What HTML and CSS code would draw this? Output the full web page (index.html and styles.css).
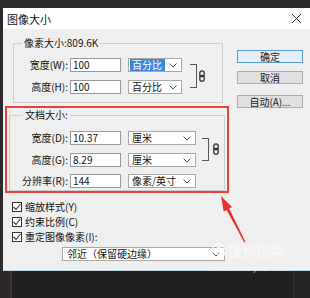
FILE: index.html
```html
<!DOCTYPE html>
<html>
<head>
    <meta charset="UTF-8">
    <title>图像大小</title>
    <link rel="stylesheet" href="styles.css">
</head>
<body>
    <div class="screen">
        <div class="dialog">
            <div class="titlebar">
                <span class="title">图像大小</span>
                <svg class="close" width="11" height="11" viewBox="0 0 11 11"><path d="M1 1L10 10M10 1L1 10" stroke="#333" stroke-width="1"/></svg>
            </div>
            <div class="content">
                <div class="left">
                    <!-- pixel size -->
                    <fieldset class="group group-pixel">
                        <legend>像素大小:809.6K</legend>
                        <div class="linked">
                            <div class="rows">
                                <div class="row">
                                    <label>宽度(W):</label>
                                    <div class="input">100</div>
                                    <div class="select selected"><span class="value">百分比</span><svg class="chev" width="8" height="5" viewBox="0 0 8 5"><polyline points="0.5,0.5 4,4 7.5,0.5" fill="none" stroke="#555"/></svg></div>
                                </div>
                                <div class="row">
                                    <label>高度(H):</label>
                                    <div class="input">100</div>
                                    <div class="select"><span class="value">百分比</span><svg class="chev" width="8" height="5" viewBox="0 0 8 5"><polyline points="0.5,0.5 4,4 7.5,0.5" fill="none" stroke="#555"/></svg></div>
                                </div>
                            </div>
                            <div class="bracket"></div>
                            <svg class="chain" width="6" height="12" viewBox="0 0 6 12"><rect x="0.8" y="0.8" width="4.4" height="5.8" rx="2.2" fill="none" stroke="#333" stroke-width="1.3"/><rect x="0.8" y="5.4" width="4.4" height="5.8" rx="2.2" fill="none" stroke="#333" stroke-width="1.3"/></svg>
                        </div>
                    </fieldset>

                    <!-- document size, marked in red -->
                    <div class="highlight">
                        <fieldset class="group group-doc">
                            <legend>文档大小:</legend>
                            <div class="linked">
                                <div class="rows">
                                    <div class="row">
                                        <label>宽度(D):</label>
                                        <div class="input">10.37</div>
                                        <div class="select"><span class="value">厘米</span><svg class="chev" width="8" height="5" viewBox="0 0 8 5"><polyline points="0.5,0.5 4,4 7.5,0.5" fill="none" stroke="#555"/></svg></div>
                                    </div>
                                    <div class="row">
                                        <label>高度(G):</label>
                                        <div class="input">8.29</div>
                                        <div class="select"><span class="value">厘米</span><svg class="chev" width="8" height="5" viewBox="0 0 8 5"><polyline points="0.5,0.5 4,4 7.5,0.5" fill="none" stroke="#555"/></svg></div>
                                    </div>
                                </div>
                                <div class="bracket"></div>
                                <svg class="chain" width="6" height="12" viewBox="0 0 6 12"><rect x="0.8" y="0.8" width="4.4" height="5.8" rx="2.2" fill="none" stroke="#333" stroke-width="1.3"/><rect x="0.8" y="5.4" width="4.4" height="5.8" rx="2.2" fill="none" stroke="#333" stroke-width="1.3"/></svg>
                            </div>
                            <div class="row row-res">
                                <label>分辨率(R):</label>
                                <div class="input">144</div>
                                <div class="select"><span class="value">像素/英寸</span><svg class="chev" width="8" height="5" viewBox="0 0 8 5"><polyline points="0.5,0.5 4,4 7.5,0.5" fill="none" stroke="#555"/></svg></div>
                            </div>
                        </fieldset>
                    </div>

                    <div class="options">
                        <div class="option"><span class="check"><svg width="8" height="8" viewBox="0 0 8 8"><polyline points="0.5,4 3,6.5 7.5,1" fill="none" stroke="#333" stroke-width="1.1"/></svg></span>缩放样式(Y)</div>
                        <div class="option"><span class="check"><svg width="8" height="8" viewBox="0 0 8 8"><polyline points="0.5,4 3,6.5 7.5,1" fill="none" stroke="#333" stroke-width="1.1"/></svg></span>约束比例(C)</div>
                        <div class="option"><span class="check"><svg width="8" height="8" viewBox="0 0 8 8"><polyline points="0.5,4 3,6.5 7.5,1" fill="none" stroke="#333" stroke-width="1.1"/></svg></span>重定图像像素(I):</div>
                    </div>
                    <div class="select select-method"><span class="value">邻近（保留硬边缘）</span><svg class="chev" width="8" height="5" viewBox="0 0 8 5"><polyline points="0.5,0.5 4,4 7.5,0.5" fill="none" stroke="#555"/></svg></div>
                </div>

                <div class="buttons">
                    <div class="btn btn-default">确定</div>
                    <div class="btn">取消</div>
                    <div class="btn btn-auto">自动(A)...</div>
                </div>
            </div>
        </div>
        <div class="below">
            <div class="below-left"></div>
            <div class="below-mid"></div>
            <div class="below-right"></div>
        </div>
    </div>

    <!-- annotation arrow -->
    <svg class="arrow" width="310" height="298" viewBox="0 0 310 298">
        <polygon points="221,196 232,207 229.2,208.6 245.5,242 244.3,242.4 226.6,210 223.6,211.6" fill="#e8322f"/>
    </svg>

    <!-- watermark -->
    <div class="watermark">
        <div class="wm-top">
            <svg width="17" height="16" viewBox="0 0 17 16"><circle cx="8.5" cy="8" r="6.8" fill="none" stroke="#fff" stroke-width="1.6"/><path d="M11 5.2C9.5 4 6 4.5 6.4 6.8C6.8 8.6 10.8 7.8 10.6 10C10.4 12 7 11.8 5.6 10.6" fill="none" stroke="#fff" stroke-width="1.4"/></svg>
            <span>搜狗指南</span>
        </div>
        <div class="wm-url">zhinan.sogou.com</div>
    </div>
</body>
</html>
```

FILE: styles.css
```css
body {
    margin: 0;
    width: 310px;
    height: 298px;
    overflow: hidden;
    background-color: #1e1e1e;
    font-family: "Noto Sans CJK SC", "Noto Sans", sans-serif;
    font-size: 10px;
    color: #111;
    position: relative;
}
.screen {
    padding-top: 8px;
    background-color: #2a2a2a;
}
.dialog {
    margin-left: 3px;
    height: 263px;
    box-sizing: border-box;
    background-color: #f0efef;
    border-bottom: 1px solid #c3d7e6;
}
.titlebar {
    height: 21px;
    background-color: #fff;
    display: flex;
    align-items: center;
    justify-content: space-between;
    padding: 0 8px 0 4px;
}
.title {
    font-size: 11px;
    line-height: 14px;
}
.content {
    display: flex;
    padding-top: 8px;
}
.left {
    width: 226px;
}
.group {
    margin: 0;
    padding: 0;
    border: 1px solid #cdcdcd;
    min-width: 0;
}
.group legend {
    padding: 0 2px;
    line-height: 12px;
}
.group-pixel {
    margin-left: 10px;
    width: 210px;
    box-sizing: border-box;
    padding-bottom: 8px;
}
.group-pixel legend {
    margin-left: 8px;
}
.linked {
    display: flex;
    align-items: center;
}
.group-pixel .linked {
    margin-top: 9px;
}
.rows {
    display: flex;
    flex-direction: column;
    gap: 8px;
}
.row {
    display: flex;
    align-items: center;
    height: 14px;
}
.row label {
    width: 54px;
    margin-right: 2px;
    text-align: right;
    line-height: 12px;
}
.input {
    width: 51px;
    height: 14px;
    box-sizing: border-box;
    border: 1px solid #9a9a9a;
    background-color: #fff;
    padding-left: 2px;
    line-height: 12px;
}
.select {
    display: flex;
    align-items: center;
    height: 14px;
    box-sizing: border-box;
    border: 1px solid #a8a8a8;
    background-color: #fff;
    padding: 0 1px;
    margin-left: 7px;
    width: 54px;
}
.select .value {
    flex: 1;
    padding-left: 2px;
    line-height: 12px;
    white-space: nowrap;
}
.select.selected .value {
    background-color: #3b88d9;
    color: #fff;
}
.chev {
    margin: 0 3px 0 4px;
    flex-shrink: 0;
}
.bracket {
    width: 7px;
    height: 24px;
    box-sizing: border-box;
    border: 1px solid #555;
    border-left: none;
    margin-left: 8px;
}
.chain {
    margin-left: 2px;
}
.highlight {
    margin: 3px 0 0 2px;
    width: 224px;
    box-sizing: border-box;
    border: 2px solid #e8403b;
}
.group-doc {
    margin: 1px 2px 0 2px;
    padding-bottom: 2px;
}
.group-doc legend {
    margin-left: 13px;
}
.group-doc .linked {
    margin-top: 10px;
}
.group-doc .row label {
    width: 58px;
}
.group-doc .select {
    width: 68px;
}
.group-doc .bracket {
    height: 23px;
    margin-left: 6px;
}
.group-doc .chain {
    margin-left: 4px;
}
.row-res {
    margin-top: 7px;
}
.options {
    margin: 6px 0 0 9px;
}
.option {
    display: flex;
    align-items: center;
    height: 15px;
    line-height: 12px;
}
.check {
    width: 10px;
    height: 10px;
    box-sizing: border-box;
    border: 1px solid #333;
    background-color: #fff;
    margin-right: 3px;
    display: flex;
    align-items: center;
    justify-content: center;
}
.select-method {
    margin: 3px 0 0 59px;
    width: 163px;
}
.select-method .value {
    padding-left: 3px;
}
.buttons {
    margin-left: 8px;
    margin-top: 13px;
    width: 66px;
}
.btn {
    height: 13px;
    box-sizing: border-box;
    border: 1px solid #adadad;
    background-color: #e1e1e1;
    text-align: center;
    line-height: 11px;
    color: #222;
}
.btn + .btn {
    margin-top: 8px;
}
.btn-default {
    border-color: #5a9bd5;
    background-color: #e3eef8;
}
.btn + .btn-auto {
    margin-top: 11px;
}
.below {
    display: flex;
    height: 27px;
}
.below-left {
    width: 10px;
    background-color: #2b2727;
    border-right: 2px solid #383838;
}
.below-mid {
    flex: 1;
    background-color: #1f1f1f;
}
.below-right {
    width: 16px;
    background-color: #232323;
    border-left: 1px solid #333;
}
.arrow {
    position: absolute;
    left: 0;
    top: 0;
}
.watermark {
    position: absolute;
    left: 208px;
    top: 242px;
    color: rgba(255, 255, 255, 0.75);
    opacity: 0.8;
}
.wm-top {
    display: flex;
    align-items: center;
    gap: 1px;
    margin-left: 2px;
}
.wm-top span {
    font-size: 14px;
    line-height: 17px;
}
.wm-url {
    font-family: "DejaVu Sans", sans-serif;
    font-size: 7px;
    letter-spacing: 1.2px;
    margin-top: 6px;
    line-height: 8px;
}
```
